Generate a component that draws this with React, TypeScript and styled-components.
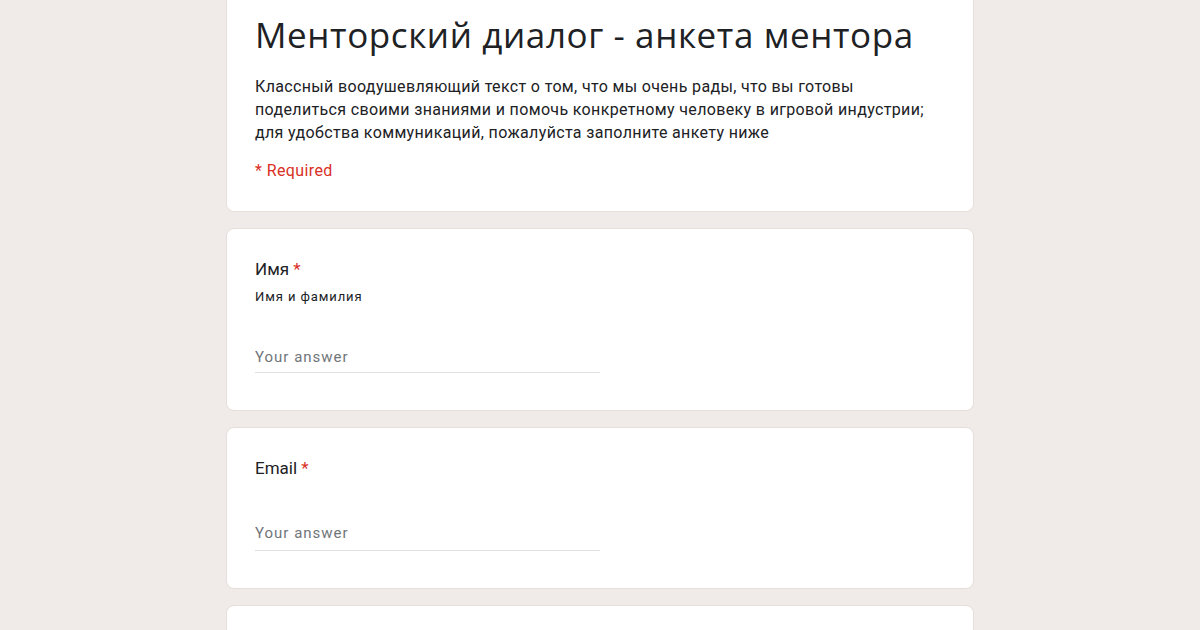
import styled, { createGlobalStyle } from "styled-components";

const GlobalStyle = createGlobalStyle`
  html, body {
    margin: 0;
    padding: 0;
    background: #f0ebe9;
  }
  body {
    font-family: Roboto, "Liberation Sans", sans-serif;
    color: #202124;
  }
`;

const questions = [
  { title: "Имя", hint: "Имя и фамилия" },
  { title: "Email" },
];

function App() {
  return (
    <>
      <GlobalStyle />
      <Page>
        <HeaderCard>
          <FormTitle>Менторский диалог - анкета ментора</FormTitle>
          <Description>
            Классный воодушевляющий текст о том, что мы очень рады, что вы готовы
            <br />
            поделиться своими знаниями и помочь конкретному человеку в игровой индустрии;
            <br />
            для удобства коммуникаций, пожалуйста заполните анкету ниже
          </Description>
          <RequiredNote>* Required</RequiredNote>
        </HeaderCard>

        {questions.map((q) => (
          <QuestionCard key={q.title}>
            <QuestionTitle>
              {q.title} <Star>*</Star>
            </QuestionTitle>
            {q.hint && <Hint>{q.hint}</Hint>}
            <AnswerInput placeholder="Your answer" $withHint={!!q.hint} />
          </QuestionCard>
        ))}

        <QuestionCard />
      </Page>
    </>
  );
}

export default App;

const Page = styled.main`
  width: 748px;
  margin: 0 auto;
  display: flex;
  flex-direction: column;
  gap: 16px;
`;

const Card = styled.section`
  background: #fff;
  border: 1px solid #e6dedb;
  border-radius: 8px;
  padding: 0 28px;
`;

const HeaderCard = styled(Card)`
  border-top: none;
  border-radius: 0 0 8px 8px;
  padding-top: 11px;
  padding-bottom: 31px;
`;

const FormTitle = styled.h1`
  margin: 0;
  font-family: "Open Sans", Roboto, sans-serif;
  font-weight: 400;
  font-size: 35px;
  letter-spacing: 0.6px;
  line-height: 48px;
  color: #202124;
`;

const Description = styled.p`
  margin: 16px 0 0;
  font-size: 16px;
  line-height: 23px;
  letter-spacing: 0.35px;
  color: #202124;
  white-space: nowrap;
`;

const RequiredNote = styled.div`
  margin-top: 17px;
  font-size: 16px;
  letter-spacing: 0.4px;
  color: #d93025;
`;

const QuestionCard = styled(Card)`
  padding-top: 28px;
  padding-bottom: 37px;
  min-height: 40px;
`;

const QuestionTitle = styled.div`
  font-size: 17px;
  line-height: 24px;
  color: #202124;
`;

const Star = styled.span`
  color: #d93025;
`;

const Hint = styled.div`
  margin-top: 8px;
  font-size: 13px;
  letter-spacing: 0.9px;
  line-height: 16px;
  color: #202124;
`;

const AnswerInput = styled.input<{ $withHint: boolean }>`
  display: block;
  width: 345px;
  margin-top: ${(p) => (p.$withHint ? "39px" : "40px")};
  padding: 4px 0 ${(p) => (p.$withHint ? "6px" : "8px")};
  border: none;
  border-bottom: 1px solid #e0e0e0;
  outline: none;
  font-family: Roboto, "Liberation Sans", sans-serif;
  font-size: 15px;
  letter-spacing: 1px;
  color: #202124;
  background: transparent;

  &::placeholder {
    color: #70757a;
  }
`;
